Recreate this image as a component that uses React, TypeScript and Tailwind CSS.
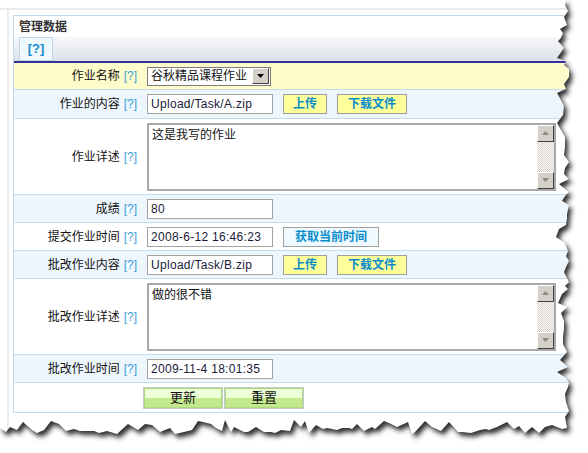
import React from "react";

function tornPaper(): string {
  let s = 98765;
  const r = () => {
    s = (s * 16807) % 2147483647;
    return s / 2147483647;
  };
  const pts: [number, number][] = [
    [0, 0],
    [566, 0],
  ];
  let y = 5;
  while (y < 424) {
    const deep = r() < 0.35 ? 7 : 0;
    pts.push([Math.round(563 + r() * 7 - deep), Math.round(y)]);
    y += 3 + r() * 7;
  }
  pts.push([567, 428]);
  let x = 562;
  while (x > 4) {
    const deep = r() < 0.35 ? 7 : 0;
    pts.push([Math.round(x), Math.round(427 + r() * 7 - deep)]);
    x -= 3 + r() * 8;
  }
  pts.push([0, 428]);
  return "M" + pts.map((p) => p.join(",")).join("L") + "Z";
}

function Help() {
  return <span className="ml-[4px] text-[#3a9fd6]">[?]</span>;
}

function Row({
  label,
  bg,
  h,
  children,
}: {
  label?: string;
  bg: string;
  h: string;
  children?: React.ReactNode;
}) {
  return (
    <div className={`flex border-b border-[#c6dbea] ${bg} ${h}`}>
      <div className="w-[129px] shrink-0 flex items-center justify-end pr-[6px] text-[12px] text-[#111]">
        {label && (
          <>
            {label}
            <Help />
          </>
        )}
      </div>
      <div className="flex-1 flex items-center pl-[4px]">{children}</div>
    </div>
  );
}

function Field({ value }: { value: string }) {
  return (
    <div className="w-[126px] h-[20px] border border-[#a4a4a4] bg-white flex items-center pl-[3px] text-[12px] tracking-[0.3px] text-[#1a1a3a] whitespace-nowrap">
      {value}
    </div>
  );
}

function YBtn({ w, text }: { w: string; text: string }) {
  return (
    <div
      className={`${w} h-[20px] ml-[10px] border border-[#9f9f9f] bg-[#ffff99] flex items-center justify-center text-[12px] font-bold text-[#0b8dcc]`}
    >
      {text}
    </div>
  );
}

function ScrollBtn({ up }: { up: boolean }) {
  return (
    <div className="w-[17px] h-[17px] bg-[#d4d0c8] border-t border-l border-t-[#ffffff] border-l-[#ffffff] border-r border-b border-r-[#404040] border-b-[#404040] flex items-center justify-center">
      <svg width="7" height="4" viewBox="0 0 7 4">
        {up ? (
          <path d="M3.5 0 L7 4 L0 4 Z" fill="#8a8a8a" />
        ) : (
          <path d="M0 0 L7 0 L3.5 4 Z" fill="#8a8a8a" />
        )}
      </svg>
    </div>
  );
}

function TextArea({ value }: { value: string }) {
  return (
    <div className="w-[409px] h-[68px] border-2 border-[#a9a9a9] bg-white flex">
      <div className="flex-1 pl-[3px] pt-[1px] text-[12px] text-[#111]">{value}</div>
      <div className="w-[17px] flex flex-col">
        <ScrollBtn up />
        <div className="flex-1 bg-[image:repeating-conic-gradient(#d4d0c8_0%_25%,#ffffff_0%_50%)] bg-[length:2px_2px]" />
        <ScrollBtn up={false} />
      </div>
    </div>
  );
}

function GreenBtn({ text }: { text: string }) {
  return (
    <div className="w-[80px] h-[22px] border border-[#c9c9c9] p-0">
      <div className="h-full border border-[#a9dc7c] flex flex-col relative">
        <div className="h-1/2 bg-[#ecffd6]" />
        <div className="h-1/2 bg-[#c3e98c]" />
        <div className="absolute inset-0 flex items-center justify-center text-[13px] text-[#111]">
          {text}
        </div>
      </div>
    </div>
  );
}

export default function App() {
  const paper = tornPaper();
  const outer = `M0,0H588V453H0Z ${paper}`;
  return (
    <div className="relative w-[588px] h-[453px] bg-white overflow-hidden font-['Liberation_Sans','Noto_Sans_CJK_SC',sans-serif]">
      <div className="mt-[8px] border-t-2 border-[#ebebeb]">
        <div className="ml-[7px] border-l-2 border-[#ebebeb] pt-[5px] pl-[4px] pb-[40px]">
          <div className="w-[560px] border border-[#c3d8e8] bg-white">
            <div className="h-[22px] flex items-center pl-[5px] text-[12px] font-bold text-[#333]">
              管理数据
            </div>
            <div className="h-[26px] border-b-2 border-[#32329a] bg-gradient-to-b from-[#f8f8fa] to-[#dce0e9] pl-[5px]">
              <div className="w-[34px] h-[24px] -mt-[1px] border border-[#c5d6e3] bg-[#eef8fd] flex items-center justify-center text-[13px] font-bold text-[#1b8bcc]">
                [?]
              </div>
            </div>
            <Row label="作业名称" bg="bg-[#fffccc]" h="h-[27px]">
              <div className="w-[124px] h-[19px] border border-[#7c7c7c] bg-white flex items-center">
                <div className="flex-1 pl-[3px] text-[12px] text-[#111] whitespace-nowrap">谷秋精品课程作业</div>
                <div className="w-[17px] h-[16px] mr-[1px] bg-[#d4d0c8] border-t border-l border-t-[#ffffff] border-l-[#ffffff] border-r border-b border-r-[#404040] border-b-[#404040] flex items-center justify-center">
                  <svg width="7" height="4" viewBox="0 0 7 4">
                    <path d="M0 0 L7 0 L3.5 4 Z" fill="#000" />
                  </svg>
                </div>
              </div>
            </Row>
            <Row label="作业的内容" bg="bg-[#eef6fd]" h="h-[29px]">
              <Field value="Upload/Task/A.zip" />
              <YBtn w="w-[44px]" text="上传" />
              <YBtn w="w-[70px]" text="下载文件" />
            </Row>
            <Row label="作业详述" bg="bg-white" h="h-[76px]">
              <TextArea value="这是我写的作业" />
            </Row>
            <Row label="成绩" bg="bg-[#eef6fd]" h="h-[28px]">
              <Field value="80" />
            </Row>
            <Row label="提交作业时间" bg="bg-white" h="h-[28px]">
              <Field value="2008-6-12 16:46:23" />
              <div className="w-[96px] h-[20px] ml-[10px] border border-[#9f9f9f] bg-[#eefaff] flex items-center justify-center text-[12px] font-bold text-[#0b8dcc]">
                获取当前时间
              </div>
            </Row>
            <Row label="批改作业内容" bg="bg-[#eef6fd]" h="h-[28px]">
              <Field value="Upload/Task/B.zip" />
              <YBtn w="w-[44px]" text="上传" />
              <YBtn w="w-[70px]" text="下载文件" />
            </Row>
            <Row label="批改作业详述" bg="bg-white" h="h-[76px]">
              <TextArea value="做的很不错" />
            </Row>
            <Row label="批改作业时间" bg="bg-[#eef6fd]" h="h-[28px]">
              <Field value="2009-11-4 18:01:35" />
            </Row>
            <div className="flex h-[29px] bg-white">
              <div className="w-[129px] shrink-0" />
              <div className="flex items-start pt-[4px] gap-[1px]">
                <GreenBtn text="更新" />
                <GreenBtn text="重置" />
              </div>
            </div>
          </div>
        </div>
      </div>
      <svg className="absolute inset-0 pointer-events-none" width="588" height="453">
        <defs>
          <filter id="tornBlur" x="-5%" y="-5%" width="110%" height="110%">
            <feGaussianBlur stdDeviation="2.6" />
          </filter>
          <clipPath id="tornOutside">
            <path clipRule="evenodd" d={outer} />
          </clipPath>
        </defs>
        <path fillRule="evenodd" fill="#ffffff" d={outer} />
        <g clipPath="url(#tornOutside)">
          <path d={paper} fill="#2e2e2e" filter="url(#tornBlur)" transform="translate(3,4)" />
        </g>
      </svg>
    </div>
  );
}
